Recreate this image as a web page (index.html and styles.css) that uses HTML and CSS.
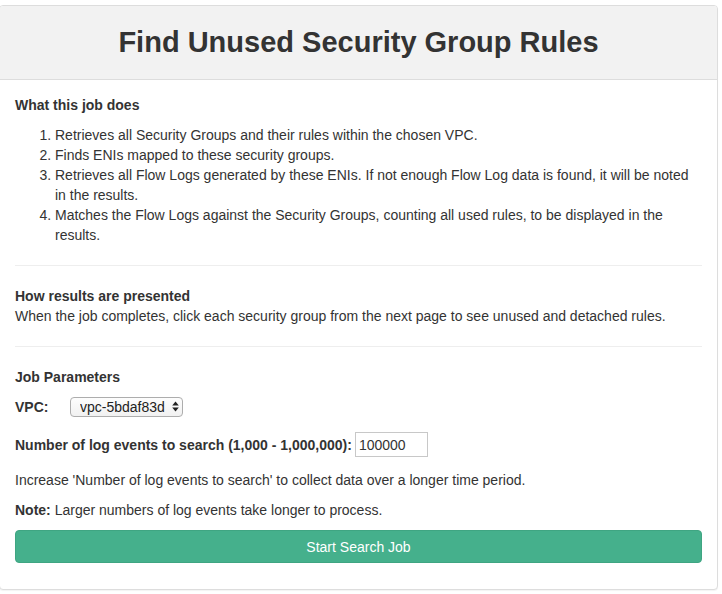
FILE: index.html
```html
<!DOCTYPE html>
<html>
<head>
<meta charset="utf-8">
<link rel="stylesheet" href="styles.css">
</head>
<body>
<div class="panel">
  <div class="panel-heading">
    <h2 class="title">Find Unused Security Group Rules</h2>
  </div>
  <div class="panel-body">
    <p class="section-title"><strong>What this job does</strong></p>
    <ol class="steps">
      <li>Retrieves all Security Groups and their rules within the chosen VPC.</li>
      <li>Finds ENIs mapped to these security groups.</li>
      <li>Retrieves all Flow Logs generated by these ENIs. If not enough Flow Log data is found, it will be noted in the results.</li>
      <li>Matches the Flow Logs against the Security Groups, counting all used rules, to be displayed in the results.</li>
    </ol>
    <hr class="divider">
    <p><strong>How results are presented</strong><br>When the job completes, click each security group from the next page to see unused and detached rules.</p>
    <hr class="divider">
    <form class="params">
      <p><strong>Job Parameters</strong></p>
      <p class="vpc-row">
        <label class="vpc-label" for="vpc">VPC:</label>
        <span class="select-wrap">
          <select id="vpc" class="vpc-select"><option>vpc-5bdaf83d</option></select>
          <svg class="select-arrows" width="7" height="11" viewBox="0 0 7 11"><path d="M3.5 0.5 L6.8 4.5 L0.2 4.5 Z" fill="#222"/><path d="M0.2 6.5 L6.8 6.5 L3.5 10.5 Z" fill="#222"/></svg>
        </span>
      </p>
      <p class="count-row">
        <label for="count"><strong>Number of log events to search (1,000 - 1,000,000):</strong></label>
        <input id="count" class="count-input" type="text" value="100000">
      </p>
      <p>Increase 'Number of log events to search' to collect data over a longer time period.</p>
      <p><strong>Note:</strong> Larger numbers of log events take longer to process.</p>
      <button type="button" class="btn-start">Start Search Job</button>
    </form>
  </div>
</div>
</body>
</html>
```
FILE: styles.css
```css
* { box-sizing: border-box; }
html, body { margin: 0; padding: 0; background: #fff; }
body {
  font-family: "Liberation Sans", Arial, Helvetica, sans-serif;
  font-size: 14px;
  line-height: 20px;
  color: #333;
}
.panel {
  margin: 5px 4px 4px -1px;
  border: 1px solid #ddd;
  border-radius: 4px;
  box-shadow: 0 1px 1px rgba(0,0,0,0.05);
  background: #fff;
}
.panel-heading {
  background: #f2f2f2;
  border-bottom: 1px solid #ddd;
  border-radius: 3px 3px 0 0;
  padding: 20px 15px 20px;
  text-align: center;
}
.title {
  margin: 0;
  font-size: 29px;
  line-height: 33px;
  font-weight: bold;
  color: #333;
}
.panel-body { padding: 15px; }
p { margin: 0 0 10px; }
.steps { margin: 0 0 10px; padding-left: 40px; }
.divider {
  margin: 20px 0;
  border: 0;
  border-top: 1px solid #eee;
  height: 0;
}
.vpc-row { display: flex; align-items: center; height: 20px; }
.vpc-label { font-weight: bold; width: 55px; }
.select-wrap { position: relative; display: inline-block; }
.vpc-select {
  -webkit-appearance: none;
  appearance: none;
  font-family: "Liberation Sans", Arial, sans-serif;
  font-size: 14px;
  color: #222;
  height: 20px;
  width: 113px;
  padding: 0 16px 0 9px;
  border: 1px solid #adadad;
  border-radius: 4px;
  background: linear-gradient(#fdfdfd, #f1f1f1);
  line-height: 18px;
}
.select-arrows { position: absolute; right: 4px; top: 4px; pointer-events: none; }
.count-row { margin: 15px 0 13px; display: flex; align-items: center; height: 25px; }
.count-row label { margin-right: 3px; }
.count-input {
  width: 73px;
  height: 25px;
  border: 1px solid #c8c8c8;
  padding: 1px 3px;
  font-family: "Liberation Sans", Arial, sans-serif;
  font-size: 14px;
  color: #333;
}
.btn-start {
  display: block;
  width: 100%;
  height: 33px;
  margin-bottom: 11px;
  border: 1px solid #3fa582;
  border-radius: 4px;
  background: #45b08c;
  color: #fff;
  font-family: "Liberation Sans", Arial, sans-serif;
  font-size: 14px;
  line-height: 20px;
}
```
